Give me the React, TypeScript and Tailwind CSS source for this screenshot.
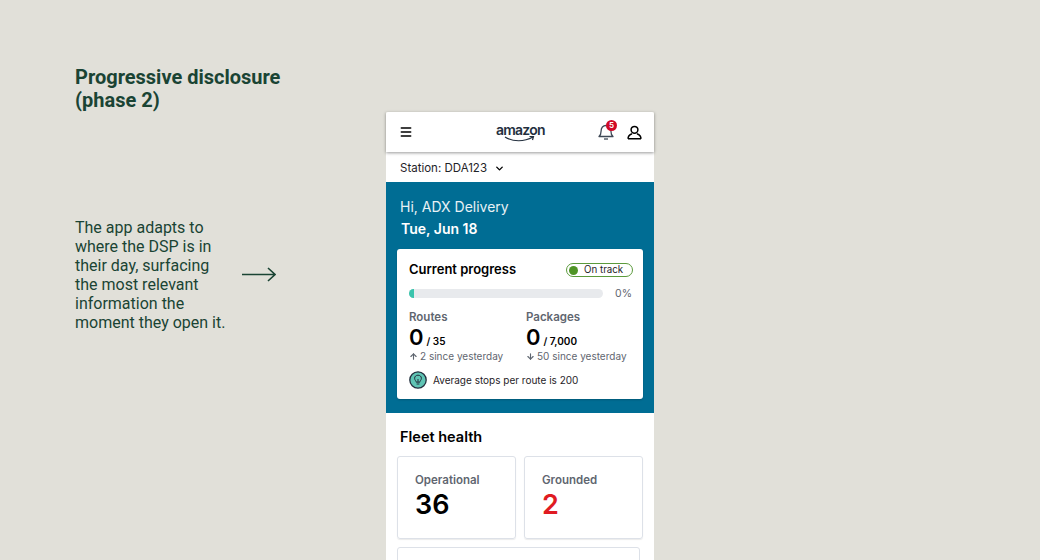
import React from 'react';
import { ArrowDown, ArrowUp, ChevronDown, Menu } from 'lucide-react';

const Stat = ({ label, value, total, delta, up }: { label: string; value: string; total: string; delta: string; up: boolean }) => (
  <div>
    <div className="text-[11.5px] leading-[14px] font-semibold text-[#5f6670]">{label}</div>
    <div className="flex items-baseline gap-[3px] mt-[1px] h-[24px]">
      <span className="text-[22px] leading-[24px] font-semibold text-black">{value}</span>
      <span className="text-[10px] font-semibold text-black">{total}</span>
    </div>
    <div className="flex items-center text-[10px] leading-[14px] text-[#5f6670]">
      {up ? <ArrowUp className="w-[9px] h-[9px] mr-[2px]" strokeWidth={3} /> : <ArrowDown className="w-[9px] h-[9px] mr-[2px]" strokeWidth={3} />}
      {delta} since yesterday
    </div>
  </div>
);

const FleetCard = ({ label, value, color }: { label: string; value: string; color: string }) => (
  <div className="h-[83px] border border-[#dde1e8] rounded-[3px] pl-[17px] pt-[16px] shadow-[0_1px_1px_rgba(0,0,0,0.08)]">
    <div className="text-[11.5px] leading-[14px] font-semibold text-[#5f6670]">{label}</div>
    <div className={`text-[27px] leading-[32px] font-semibold mt-[2px] ${color}`}>{value}</div>
  </div>
);

export default function App() {
  return (
    <div className="h-[560px] w-[1040px] overflow-hidden bg-[#e1e0d9] flex font-['Inter',sans-serif]">
      {/* Left notes */}
      <div className="w-[386px] pl-[75px] pt-[66px] flex-shrink-0 font-['Roboto',sans-serif] text-[#1a4434]">
        <h1 className="text-[20px] leading-[23px] font-bold">
          Progressive disclosure
          <br />
          (phase 2)
        </h1>
        <div className="flex mt-[106px]">
          <p className="w-[167px] pr-[12px] text-[16px] leading-[19px] flex-shrink-0">
            The app adapts to where the DSP is in their day, surfacing the most relevant information the moment they open it.
          </p>
          <svg className="mt-[49px]" width="34" height="16" viewBox="0 0 34 16" fill="none" stroke="#1a4434" strokeWidth="1.6">
            <path d="M0 7.5H33M26 1L33 7.5L26 14" />
          </svg>
        </div>
      </div>

      {/* Phone */}
      <div className="w-[268px] mt-[112px] bg-white rounded-t-[2px] flex-shrink-0">
        <div className="relative z-10 h-[40px] flex items-center pl-[13px] pr-[12px] shadow-[0_1px_3px_rgba(0,0,0,0.4)]">
          <Menu className="w-[14px] h-[14px] text-black" strokeWidth={2.6} />
          <div className="relative ml-[83px] mt-[2px] w-[48px] h-[24px] text-[#232f3e]">
            <span className="block text-center text-[14px] leading-[17px] font-semibold tracking-[-0.8px]">amazon</span>
            <svg className="absolute left-[8px] top-[14px]" width="32" height="8" viewBox="0 0 32 8" fill="none" stroke="#232f3e" strokeWidth="1.2">
              <path d="M1 2C9 7 20 7 29 2M25.5 1.5L29.5 1.5L28.5 5" />
            </svg>
          </div>
          <div className="ml-auto flex items-center gap-[13px]">
            <div className="relative w-[16px] h-[18px]">
              <svg width="16" height="18" viewBox="0 0 16 18" fill="none" stroke="#3f4956" strokeWidth="1.3">
                <path d="M1 13.5C2.8 12 3.1 10 3.1 8C3.1 4.8 5 2.5 8 2.5C11 2.5 12.9 4.8 12.9 8C12.9 10 13.2 12 15 13.5H1Z" strokeLinejoin="round" />
                <path d="M6 16H10" />
              </svg>
              <span className="absolute -top-[3px] left-[8px] w-[11px] h-[11px] rounded-full bg-[#d00a26] text-white text-[8px] leading-[11px] text-center font-semibold">5</span>
            </div>
            <svg width="15" height="15" viewBox="0 0 15 15" fill="none" stroke="#000" strokeWidth="1.5">
              <circle cx="7.5" cy="4.8" r="3.4" />
              <path d="M1 13.8C1 10.8 3.5 9.3 5 8.7M14 13.8C14 10.8 11.5 9.3 10 8.7M1 13.8H14" strokeLinejoin="round" />
            </svg>
          </div>
        </div>

        <div className="h-[30px] flex items-center pl-[14px] pt-[3px] text-[11.5px] text-[#1f2328]">
          Station: DDA123
          <ChevronDown className="w-[11px] h-[11px] ml-[7px] text-black" strokeWidth={3} />
        </div>

        <div className="h-[231px] bg-[#006d94] px-[11px] pt-[16px]">
          <div className="pl-[3px] text-[14px] leading-[17px] text-[#e8f1f5]">Hi, ADX Delivery</div>
          <div className="pl-[4px] mt-[5px] text-[14px] leading-[17px] font-semibold text-white">Tue, Jun 18</div>

          <div className="mt-[12px] h-[150px] bg-white rounded-[3px] pl-[12px] pr-[10px] pt-[13px] shadow-[0_1px_2px_rgba(0,0,0,0.2)]">
            <div className="flex items-center justify-between h-[16px]">
              <span className="text-[13px] font-semibold text-black">Current progress</span>
              <span className="flex items-center w-[67px] h-[14px] border border-[#5b9a3c] rounded-full pl-[2px] text-[9.75px] text-[#1f2328]">
                <span className="w-[9px] h-[9px] rounded-full bg-[#4f9426] mr-[6px]" />
                On track
              </span>
            </div>
            <div className="flex items-center mt-[8px] h-[14px]">
              <div className="w-[194px] h-[9px] rounded-full bg-[#e8eaed] overflow-hidden">
                <div className="w-[5px] h-full bg-[#3bc4ad]" />
              </div>
              <span className="ml-auto mr-[1px] mt-[1px] text-[10.5px] text-[#5f6670]">0%</span>
            </div>
            <div className="grid grid-cols-[117px_1fr] mt-[10px]">
              <Stat label="Routes" value="0" total="/ 35" delta="2" up />
              <Stat label="Packages" value="0" total="/ 7,000" delta="50" up={false} />
            </div>
            <div className="flex items-center mt-[8px] text-[10px] text-[#1f2328]">
              <svg width="18" height="18" viewBox="0 0 18 18" fill="none" className="mr-[6px]">
                <circle cx="9" cy="9" r="8.2" fill="#5fc4b4" stroke="#232f3e" strokeWidth="1.3" />
                <path d="M7.2 11.2C7.2 9.8 5.6 9.2 5.6 7.2C5.6 5.4 7.1 4.2 9 4.2C10.9 4.2 12.4 5.4 12.4 7.2C12.4 9.2 10.8 9.8 10.8 11.2H7.2Z" stroke="#232f3e" strokeWidth="1" />
                <path d="M7.6 13H10.4M9 8V11" stroke="#232f3e" strokeWidth="1" />
              </svg>
              Average stops per route is 200
            </div>
          </div>
        </div>

        <div className="px-[11px] pt-[15px]">
          <h2 className="pl-[3px] text-[14.5px] leading-[17px] font-semibold text-black">Fleet health</h2>
          <div className="grid grid-cols-[119px_119px] gap-[8px] mt-[11px]">
            <FleetCard label="Operational" value="36" color="text-black" />
            <FleetCard label="Grounded" value="2" color="text-[#e01b22]" />
          </div>
          <div className="h-[40px] w-[243px] mt-[8px] border border-[#dde1e8] rounded-[3px]" />
        </div>
      </div>
    </div>
  );
}
